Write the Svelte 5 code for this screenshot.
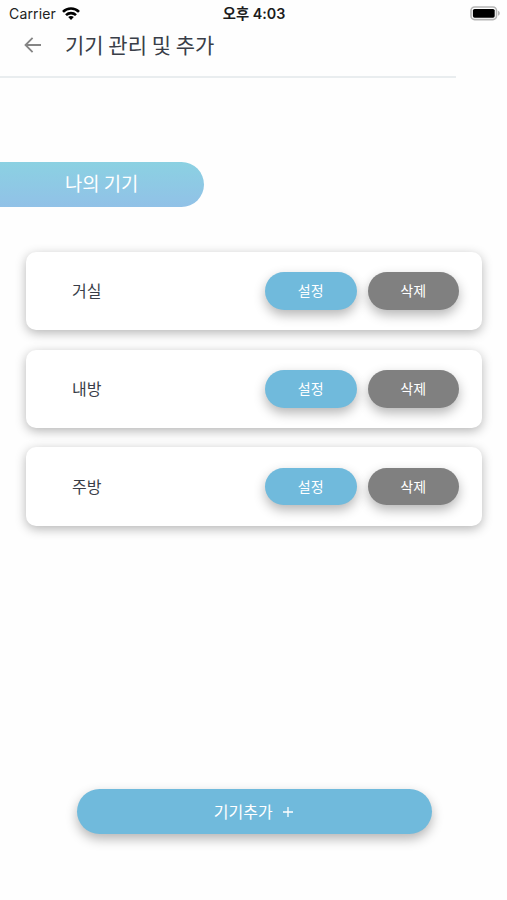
<script>
  const devices = ['거실', '내방', '주방'];
</script>

<div class="screen">
  <div class="status">
    <div class="carrier">
      <span>Carrier</span>
      <svg width="18" height="14" viewBox="0 0 18 14">
        <g fill="none" stroke="#000" stroke-width="2.6">
          <path d="M1 4.9C5.4 .4 12.6 .4 17 4.9" />
          <path d="M4 8.1C6.8 5.4 11.2 5.4 14 8.1" />
        </g>
        <path d="M6.2 10.1C7.8 8.7 10.2 8.7 11.8 10.1L9 13Z" />
      </svg>
    </div>
    <div class="time">오후 4:03</div>
    <svg class="battery" width="31" height="15" viewBox="0 0 31 15">
      <rect x="1" y="1" width="25.5" height="12.6" rx="3.6" fill="#fff" stroke="#b5b5b5" stroke-width="1.6" />
      <rect x="2.9" y="2.9" width="21.8" height="8.9" rx="1.7" fill="#000" />
      <path d="M28 4.8C30.4 5.7 30.4 8.9 28 9.8Z" fill="#b5b5b5" />
    </svg>
  </div>

  <header>
    <svg width="18" height="16" viewBox="0 0 18 16" fill="none" stroke="#858585" stroke-width="1.8">
      <path d="M17 8H2M8.6 .9L1.5 8L8.6 15.1" />
    </svg>
    <h1>기기 관리 및 추가</h1>
  </header>

  <div class="section">나의 기기</div>

  <main>
    {#each devices as name}
      <div class="card">
        <span class="name">{name}</span>
        <button>설정</button>
        <button class="delete">삭제</button>
      </div>
    {/each}
  </main>

  <button class="add"><span>기기추가</span><svg width="10" height="10" viewBox="0 0 10 10" stroke="#fff" stroke-width="1.3"><path d="M5 0V10M0 5H10" /></svg></button>
</div>

<style>
  :global(body) {
    background: #fefefe;
  }
  .screen {
    box-sizing: border-box;
    width: 507px;
    height: 900px;
    overflow: hidden;
    display: flex;
    flex-direction: column;
    background: #fefefe;
    color: #393e48;
    font-family: 'Noto Sans CJK KR', 'Noto Sans', sans-serif;
  }
  .status {
    height: 27px;
    flex: none;
    display: grid;
    grid-template-columns: 1fr auto 1fr;
    align-items: center;
    padding: 0 6px 0 9px;
    box-sizing: border-box;
    color: #222;
    font-family: Inter, 'Noto Sans CJK KR', sans-serif;
    font-size: 14px;
    line-height: 27px;
  }
  .carrier {
    display: flex;
    align-items: center;
    gap: 6px;
    letter-spacing: 0.15px;
  }
  .time {
    margin-left: -2px;
    font-weight: 600;
    font-size: 14.3px;
    color: #1c1c1c;
  }
  .battery {
    justify-self: end;
  }
  header {
    box-sizing: border-box;
    flex: none;
    width: 456px;
    height: 51px;
    padding: 0 0 14px 24px;
    display: flex;
    align-items: center;
    gap: 23px;
    border-bottom: 2px solid #e9edef;
  }
  h1 {
    margin: 0;
    font-size: 21px;
    line-height: 35px;
    font-weight: 400;
  }
  .section {
    flex: none;
    box-sizing: border-box;
    width: 203.5px;
    height: 45px;
    margin-top: 83.5px;
    padding-left: 65px;
    border-radius: 0 23px 23px 0;
    background: linear-gradient(#8bd1e2, #91c1e7);
    color: #fff;
    font-size: 18.8px;
    line-height: 42px;
  }
  main {
    flex: none;
    display: flex;
    flex-direction: column;
    gap: 19.4px;
    margin: 45.5px 25px 0 26px;
  }
  .card {
    box-sizing: border-box;
    height: 78.3px;
    padding: 0 23px 0 46px;
    display: flex;
    align-items: center;
    gap: 11px;
    border-radius: 10px;
    background: #fff;
    box-shadow: 0 3px 11px rgba(0, 0, 0, 0.29);
  }
  .name {
    flex: 1;
    padding-bottom: 2px;
    font-size: 16px;
    line-height: 24px;
  }
  button {
    width: 91.5px;
    height: 37.5px;
    padding: 0 0 2px;
    border: 0;
    border-radius: 23px;
    background: #70badc;
    color: #fff;
    font-family: inherit;
    font-size: 14px;
    line-height: 20px;
    box-shadow: 0 5px 12px rgba(0, 0, 0, 0.29);
  }
  .delete {
    background: #808080;
  }
  .add {
    flex: none;
    width: 354.5px;
    height: 45px;
    margin: 263.3px 0 0 77px;
    padding: 0 2px 0 0;
    display: flex;
    align-items: center;
    justify-content: center;
    gap: 10px;
    font-size: 16px;
  }
  .add svg {
    margin-top: 2px;
  }
</style>
